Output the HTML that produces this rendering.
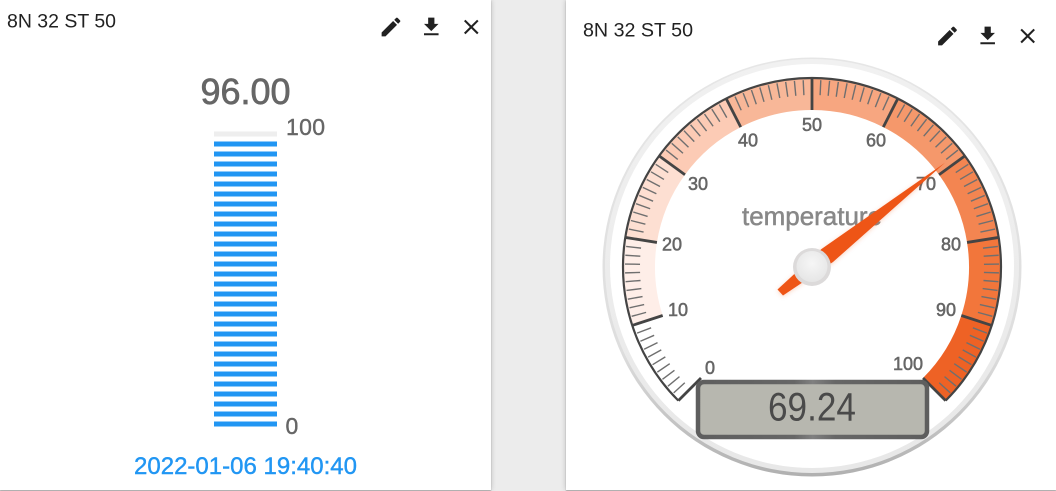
<!DOCTYPE html>
<html lang="en">
<head>
<meta charset="utf-8">
<title>Gauges</title>
<style>
html,body{margin:0;padding:0;width:1056px;height:491px;overflow:hidden;background:#ececec}
.panel{position:absolute;top:0;height:490px;background:#fff;box-shadow:0 1px 1px #a8a8a8,0 0 5px rgba(0,0,0,.22)}
#a{left:0;width:491px}
#b{left:566px;width:490px}
svg{position:absolute;left:0;top:0}
text{font-family:"Liberation Sans",sans-serif}
.l{font-size:18px;fill:#666;stroke:#666;stroke-width:.55;text-anchor:middle}
.b{fill:none;stroke-width:32}
</style>
</head>
<body>
<div class="panel" id="a"></div>
<div class="panel" id="b"></div>
<svg width="1056" height="491" viewBox="0 0 1056 491" xmlns="http://www.w3.org/2000/svg">
<defs>
<linearGradient id="r1" x1="0" y1="0" x2="0" y2="1"><stop offset="0" stop-color="#e6e6e6"/><stop offset=".7" stop-color="#dedede"/><stop offset="1" stop-color="#b0b0b0"/></linearGradient>
<linearGradient id="r2" x1="0" y1="0" x2="0" y2="1"><stop offset="0" stop-color="#f1f1f1"/><stop offset="1" stop-color="#e8e8e8"/></linearGradient>
<linearGradient id="lb" x1="0" y1="0" x2="1" y2="0"><stop offset="0" stop-color="#5e5e5e"/><stop offset=".42" stop-color="#666"/><stop offset=".5" stop-color="#808080"/><stop offset=".6" stop-color="#666"/><stop offset="1" stop-color="#5e5e5e"/></linearGradient>
<radialGradient id="hub" cx=".5" cy=".4" r=".6"><stop offset="0" stop-color="#f6f6f6"/><stop offset="1" stop-color="#e6e6e6"/></radialGradient>
<filter id="ns" x="-20%" y="-20%" width="140%" height="140%"><feDropShadow dx="0" dy="1" stdDeviation="2" flood-color="#e8501a" flood-opacity=".25"/></filter>
<path id="edit" d="M3 17.25V21h3.75L17.81 9.94l-3.75-3.75L3 17.25zM20.71 7.04c.39-.39.39-1.02 0-1.41l-2.34-2.34c-.39-.39-1.02-.39-1.41 0l-1.83 1.83 3.75 3.75 1.83-1.83z"/>
<path id="dl" d="M19 9h-4V3H9v6H5l7 7 7-7zM5 18v2h14v-2H5z"/>
<path id="cl" d="M19 6.41L17.59 5 12 10.59 6.41 5 5 6.41 10.59 12 5 17.59 6.41 19 12 13.41 17.59 19 19 17.59 13.41 12z"/>
<line id="mt" x1="812" y1="80" x2="812" y2="95" stroke="#6f6f6f" stroke-width="1.4"/>
<line id="Mt" x1="812" y1="78" x2="812" y2="110" stroke="#444" stroke-width="2.8"/>
<g id="dec">
<use href="#mt" transform="rotate(-132.3 812 267)"/><use href="#mt" transform="rotate(-129.6 812 267)"/><use href="#mt" transform="rotate(-126.9 812 267)"/><use href="#mt" transform="rotate(-124.2 812 267)"/><use href="#mt" transform="rotate(-121.5 812 267)"/><use href="#mt" transform="rotate(-118.8 812 267)"/><use href="#mt" transform="rotate(-116.1 812 267)"/><use href="#mt" transform="rotate(-113.4 812 267)"/><use href="#mt" transform="rotate(-110.7 812 267)"/>
</g>
</defs>

<!-- left panel -->
<text x="7" y="27.5" font-size="19" fill="#212121" textLength="109" lengthAdjust="spacingAndGlyphs">8N 32 ST 50</text>
<g fill="#212121">
<use href="#edit" transform="translate(378.5 14.5) scale(1.04)"/>
<use href="#dl" transform="translate(418.8 14.5) scale(1.04)"/>
<use href="#cl" transform="translate(458.8 14.5) scale(1.04)"/>
</g>
<text x="245.5" y="104" font-size="36" fill="#666" stroke="#666" stroke-width=".7" text-anchor="middle" textLength="90">96.00</text>
<rect x="214" y="131.5" width="63" height="5" fill="#eee"/>
<line x1="245.5" y1="141.5" x2="245.5" y2="426.5" stroke="#2196f3" stroke-width="63" stroke-dasharray="5 5"/>
<text x="286" y="135" font-size="23" fill="#666" stroke="#666" stroke-width=".4" textLength="39">100</text>
<text x="285.5" y="434" font-size="23" fill="#666" stroke="#666" stroke-width=".4">0</text>
<text x="134" y="474" font-size="24" fill="#2196f3" stroke="#2196f3" stroke-width=".4" textLength="223">2022-01-06 19:40:40</text>

<!-- right panel -->
<text x="583" y="36.5" font-size="19" fill="#212121" textLength="110" lengthAdjust="spacingAndGlyphs">8N 32 ST 50</text>
<g fill="#212121">
<use href="#edit" transform="translate(935 23.5) scale(1.04)"/>
<use href="#dl" transform="translate(975.2 23.5) scale(1.04)"/>
<use href="#cl" transform="translate(1015.2 23.5) scale(1.04)"/>
</g>

<!-- gauge -->
<circle cx="812" cy="267" r="209.5" fill="url(#r1)"/>
<circle cx="812" cy="266" r="207" fill="url(#r2)"/>
<circle cx="812" cy="266" r="202" fill="#fff"/>

<path class="b" stroke="#feeee8" d="M647.47 320.46A173 173 0 0 1 641.13 239.94"/>
<path class="b" stroke="#fddfd2" d="M641.13 239.94A173 173 0 0 1 672.04 165.31"/>
<path class="b" stroke="#fccbb5" d="M672.04 165.31A173 173 0 0 1 733.46 112.86"/>
<path class="b" stroke="#f8b798" d="M733.46 112.86A173 173 0 0 1 812 94"/>
<path class="b" stroke="#f7a680" d="M812 94A173 173 0 0 1 890.54 112.86"/>
<path class="b" stroke="#f5986b" d="M890.54 112.86A173 173 0 0 1 951.96 165.31"/>
<path class="b" stroke="#f38551" d="M951.96 165.31A173 173 0 0 1 982.87 239.94"/>
<path class="b" stroke="#f2763b" d="M982.87 239.94A173 173 0 0 1 976.53 320.46"/>
<path class="b" stroke="#ee6225" d="M976.53 320.46A173 173 0 0 1 934.33 389.33"/>

<path d="M678.36 400.64A189 189 0 1 1 945.64 400.64" fill="none" stroke="#444" stroke-width="2.2"/>

<use href="#dec"/>
<use href="#dec" transform="rotate(27 812 267)"/>
<use href="#dec" transform="rotate(54 812 267)"/>
<use href="#dec" transform="rotate(81 812 267)"/>
<use href="#dec" transform="rotate(108 812 267)"/>
<use href="#dec" transform="rotate(135 812 267)"/>
<use href="#dec" transform="rotate(162 812 267)"/>
<use href="#dec" transform="rotate(189 812 267)"/>
<use href="#dec" transform="rotate(216 812 267)"/>
<use href="#dec" transform="rotate(243 812 267)"/>

<use href="#Mt" transform="rotate(-135 812 267)"/>
<use href="#Mt" transform="rotate(-108 812 267)"/>
<use href="#Mt" transform="rotate(-81 812 267)"/>
<use href="#Mt" transform="rotate(-54 812 267)"/>
<use href="#Mt" transform="rotate(-27 812 267)"/>
<use href="#Mt"/>
<use href="#Mt" transform="rotate(27 812 267)"/>
<use href="#Mt" transform="rotate(54 812 267)"/>
<use href="#Mt" transform="rotate(81 812 267)"/>
<use href="#Mt" transform="rotate(108 812 267)"/>
<use href="#Mt" transform="rotate(135 812 267)"/>

<text class="l" x="710" y="374">0</text>
<text class="l" x="678" y="316">10</text>
<text class="l" x="672" y="250.5">20</text>
<text class="l" x="698" y="190">30</text>
<text class="l" x="748" y="146.5">40</text>
<text class="l" x="812" y="131">50</text>
<text class="l" x="876" y="146.5">60</text>
<text class="l" x="926" y="190">70</text>
<text class="l" x="951" y="250.5">80</text>
<text class="l" x="946" y="316">90</text>
<text class="l" x="908" y="370">100</text>

<text x="812" y="225" font-size="26" fill="#888" stroke="#888" stroke-width=".5" text-anchor="middle" textLength="140">temperature</text>

<!-- LCD -->
<rect x="698" y="382" width="229" height="55" rx="6" fill="#b7b7af" stroke="url(#lb)" stroke-width="4.5"/>
<text x="768" y="420.5" font-size="40" fill="#4a4a4a" textLength="88" lengthAdjust="spacingAndGlyphs">69.24</text>

<!-- needle -->
<polygon filter="url(#ns)" points="945,162.7 833,262 783,295.5 777.5,289.5 821.5,249" fill="#ee5418"/>
<circle cx="812" cy="267" r="19" fill="#dcdada"/>
<circle cx="812" cy="266.5" r="15.5" fill="url(#hub)"/>
</svg>
</body>
</html>
